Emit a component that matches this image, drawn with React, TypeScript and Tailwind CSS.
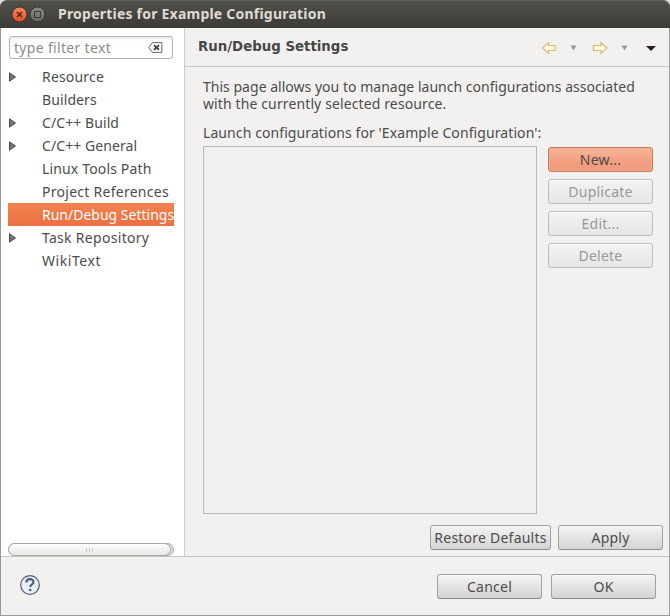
import { useState } from "react";
import clsx from "clsx";

type TreeItem = {
	label: string;
	expandable?: boolean;
	/** letter spacing that keeps the label at its native width */
	tracking: string;
};

const TREE_ITEMS: TreeItem[] = [
	{ label: "Resource", expandable: true, tracking: "tracking-[0.18px]" },
	{ label: "Builders", tracking: "tracking-[0.1px]" },
	{ label: "C/C++ Build", expandable: true, tracking: "tracking-[0.08px]" },
	{ label: "C/C++ General", expandable: true, tracking: "tracking-[0.08px]" },
	{ label: "Linux Tools Path", tracking: "tracking-[0.15px]" },
	{ label: "Project References", tracking: "tracking-[0.27px]" },
	{ label: "Run/Debug Settings", tracking: "tracking-[0px]" },
	{ label: "Task Repository", expandable: true, tracking: "tracking-[0.3px]" },
	{ label: "WikiText", tracking: "tracking-[0.55px]" },
];

type ButtonProps = {
	label: string;
	variant?: "normal" | "default" | "disabled";
	className?: string;
};

function Button({ label, variant = "normal", className }: ButtonProps) {
	return (
		<button
			disabled={variant === "disabled"}
			className={clsx(
				"flex h-[25px] shrink-0 items-center justify-center whitespace-nowrap rounded-[3px] border tracking-[0.23px]",
				variant === "normal" &&
					"border-[#a3a2a0] border-b-[#8f8e8c] bg-linear-to-b from-[#f4f4f4] to-[#d4d4d4] text-[#4c4c4c] shadow-[inset_0_1px_0_#fbfbfb]",
				variant === "default" &&
					"border-[#c17b60] bg-linear-to-b from-[#f9b69c] via-[#f2a283] to-[#ef9a7a] text-[#4c4c4c] shadow-[inset_0_0_0_1px_#f8aa8c]",
				variant === "disabled" &&
					"border-[#bcbbb9] bg-linear-to-b from-[#f3f3f3] to-[#e6e6e6] text-[#989898] shadow-[inset_0_1px_0_#f9f9f9]",
				className
			)}
		>
			{label}
		</button>
	);
}

function TitleBar() {
	return (
		<div className="flex h-7 shrink-0 items-center rounded-t-[7px] border-t border-[#5f5e58] bg-linear-to-b from-[#504f4a] to-[#3c3b37] pb-[2px] pl-[11px]">
			<svg width="35" height="18" viewBox="0 0 35 18" className="shrink-0">
				<defs>
					<linearGradient id="close" x1="0" y1="0" x2="0" y2="1">
						<stop offset="0" stopColor="#f58a64" />
						<stop offset="1" stopColor="#dd4c1c" />
					</linearGradient>
					<linearGradient id="max" x1="0" y1="0" x2="0" y2="1">
						<stop offset="0" stopColor="#8c8b84" />
						<stop offset="1" stopColor="#666560" />
					</linearGradient>
				</defs>
				<circle cx="8.5" cy="9.5" r="7.5" fill="url(#close)" stroke="#33312d" />
				<path d="M6 7l5 5M11 7l-5 5" stroke="#502216" strokeWidth="1.4" />
				<circle cx="26.5" cy="9.5" r="7.5" fill="url(#max)" stroke="#33322e" />
				<rect x="23.5" y="6.5" width="6" height="6" fill="none" stroke="#3c3b37" />
			</svg>
			<h1 className="ml-3 whitespace-nowrap text-[14px] font-bold tracking-[0.22px] text-[#dfdbd2]">
				Properties for Example Configuration
			</h1>
		</div>
	);
}

function FilterField() {
	return (
		<div className="ml-2 flex h-[23px] w-[164px] shrink-0 items-center justify-between rounded-[3px] border border-[#b5b3b0] bg-white pl-[4px] pr-[9px] shadow-[inset_0_2px_2px_#ececec]">
			<span className="whitespace-nowrap tracking-[0.32px] text-[#8c8c8c]">type filter text</span>
			<svg width="15" height="11" viewBox="0 0 15 11">
				<path d="M4.5.6h9.3v9.8H4.500L.7 5.500z" fill="#fff" stroke="#666" />
				<path d="M6 3.300l5 4.400M11 3.300L6 7.700" stroke="#444" strokeWidth="1.800" />
			</svg>
		</div>
	);
}

function Sidebar() {
	const [selected, setSelected] = useState("Run/Debug Settings");

	return (
		<aside className="flex w-[184px] shrink-0 flex-col border-r border-[#cfcdcb] bg-white pt-2">
			<FilterField />
			<ul className="ml-[7px] mt-[6px] w-[166px] overflow-hidden">
				{TREE_ITEMS.map((item) => (
					<li
						key={item.label}
						onClick={() => setSelected(item.label)}
						className={clsx(
							"flex h-[23px] items-center whitespace-nowrap",
							item.tracking,
							item.label === selected
								? "bg-linear-to-b from-[#f1834f] to-[#ed6f43] text-white"
								: "text-[#4c4c4c]"
						)}
					>
						<span className="w-[34px] shrink-0">
							{item.expandable && (
								<svg width="9" height="10" viewBox="0 0 9 10">
									<path d="M1.5.8v8.4L7.500 5z" fill="#777" stroke="#4d4d4d" />
								</svg>
							)}
						</span>
						{item.label}
					</li>
				))}
			</ul>
			<div className="ml-[7px] mt-auto h-[13px] w-[166px] rounded-full border border-[#b3afaa] bg-[#dedbd8]">
				<div className="-ml-px -mt-px flex h-[13px] w-[163px] items-center justify-center gap-[2px] rounded-full border border-[#aaa69f] bg-linear-to-b from-[#fdfdfd] to-[#e8e8e8]">
					<span className="h-[4px] w-px bg-[#ccc]" />
					<span className="h-[4px] w-px bg-[#ccc]" />
					<span className="h-[4px] w-px bg-[#ccc]" />
				</div>
			</div>
		</aside>
	);
}

function PageHeader() {
	return (
		<header className="flex h-[39px] shrink-0 items-center justify-between border-b border-[#cbc9c7] pl-[13px] pr-3">
			<h2 className="whitespace-nowrap pb-[1px] font-['DejaVu_Sans',sans-serif] text-[13.33px] font-bold leading-[18px] text-[#484848]">
				Run/Debug Settings
			</h2>
			<svg width="116" height="14" viewBox="0 0 116 14" className="mt-[2px]">
				<path d="M1.500 7l6-5.500V4.500h6.500v5H7.500v3z" fill="#fdf9e6" stroke="#d9bd70" strokeWidth="1.200" />
				<path d="M29.500 4.500h6l-3 5z" fill="#999" />
				<path d="M66 7l-6-5.500V4.500h-7.500v5H60v3z" fill="#fdf9e6" stroke="#d9bd70" strokeWidth="1.200" />
				<path d="M80.500 4.500h6l-3 5z" fill="#999" />
				<path d="M105 5h10l-5 5z" fill="#251c2b" />
			</svg>
		</header>
	);
}

function LaunchPage() {
	return (
		<div className="flex grow flex-col pb-[6px] pl-[18px] pr-[6px] pt-[11px]">
			<p className="whitespace-nowrap leading-[17px] tracking-[0.02px]">
				This page allows you to manage launch configurations associated
				<br />
				<span className="tracking-[0.12px]">with the currently selected resource.</span>
			</p>
			<p className="mt-[12px] whitespace-nowrap leading-[17px] tracking-[0.09px]">
				Launch configurations for 'Example Configuration':
			</p>
			<div className="mt-[5px] flex h-[368px] shrink-0 gap-[11px]">
				<div className="w-[334px] border border-[#bcb9b5] bg-[#f2f1f0]" />
				<div className="flex w-[105px] flex-col gap-[7px] pt-px">
					<Button label="New..." variant="default" />
					<Button label="Duplicate" variant="disabled" />
					<Button label="Edit..." variant="disabled" />
					<Button label="Delete" variant="disabled" />
				</div>
			</div>
			<div className="mt-auto flex justify-end gap-[7px]">
				<Button label="Restore Defaults" className="w-[121px]" />
				<Button label="Apply" className="w-[105px]" />
			</div>
		</div>
	);
}

function Footer() {
	return (
		<footer className="flex h-[59px] shrink-0 items-start justify-between border-t border-[#c5c3c1] pl-[18px] pr-[13px] pt-[17px]">
			<svg width="22" height="22" viewBox="0 0 22 22">
				<circle cx="11" cy="11" r="9.300" fill="#e9eff8" stroke="#535d70" strokeWidth="1.200" />
				<path d="M7.300 8.500c0-4.400 7.200-4.300 7.200-.6 0 2.500-3.200 2.600-3.200 5" fill="none" stroke="#4b5a77" strokeWidth="2.100" />
				<circle cx="11.200" cy="16" r="1.300" fill="#4b5a77" />
			</svg>
			<div className="flex gap-[9px]">
				<Button label="Cancel" className="w-[105px]" />
				<Button label="OK" className="w-[105px]" />
			</div>
		</footer>
	);
}

export default function App() {
	return (
		<div className="h-[616px] w-[670px] bg-[#d5dde0] font-['Noto_Sans','Open_Sans',sans-serif] text-[14px] text-[#4c4c4c]">
			<div className="flex h-full flex-col">
				<TitleBar />
				<div className="flex min-h-0 grow flex-col border-x border-b border-[#9b9a98] bg-[#f2f1f0]">
					<div className="flex min-h-0 grow">
						<Sidebar />
						<main className="flex min-w-0 grow flex-col">
							<PageHeader />
							<LaunchPage />
						</main>
					</div>
					<Footer />
				</div>
			</div>
		</div>
	);
}
